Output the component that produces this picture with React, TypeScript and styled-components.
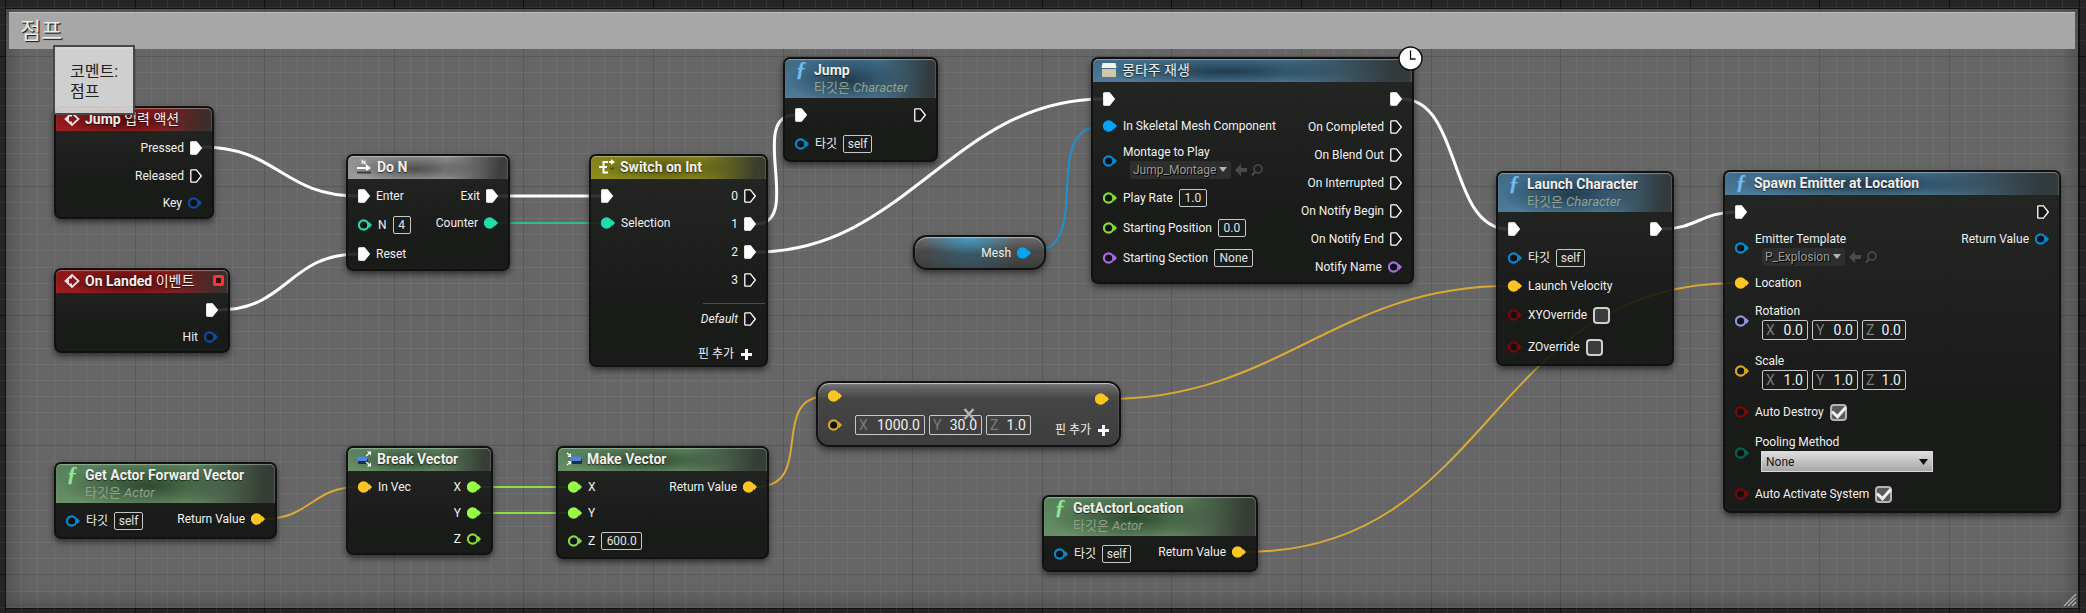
import React, { useId } from "react";
import styled, { createGlobalStyle, css } from "styled-components";

const GlobalStyle = createGlobalStyle`
  * { box-sizing: border-box; }
  body { margin: 0; background: #262626; }
  button, input, select { font: inherit; color: inherit; }
`;

const FONT = `Roboto, "Noto Sans CJK KR", sans-serif`;

/* ---------- canvas ---------- */

const Canvas = styled.main`
  position: relative;
  display: flex;
  min-height: 100vh;
  padding: 9px 8px 5px 6px;
  overflow: hidden;
  background: #252525;
  color: #f0f0f0;
  font: 12px/16px ${FONT};
`;

const CommentBox = styled.section`
  position: relative;
  flex: 1;
  display: flex;
  flex-direction: column;
  padding: 3px;
  background: rgba(255, 255, 255, 0.3);
  box-shadow: inset 0 0 24px 2px rgba(0, 0, 0, 0.32), 0 0 0 1px #111;
`;

const CommentTitle = styled.h1`
  margin: 0;
  height: 37px;
  padding: 0 11px;
  background: #a7a7a7;
  border-top: 1px solid #c0c0c0;
  color: #ececec;
  font: 400 23px/38px ${FONT};
  text-shadow: 1px 1px 1px #222, 1px 1px 0 #444;
`;

const Backdrop = styled.svg`
  position: absolute;
  inset: 0;
  width: 100%;
  height: 100%;
  pointer-events: none;
`;

const ResizeGrip = styled.svg`
  position: absolute;
  right: 9px;
  bottom: 6px;
`;

const GRID_STEPS = Array.from({ length: 40 }, (_, i) => i);

function Grid() {
  return (
    <Backdrop aria-hidden="true">
      <defs>
        <pattern id="grid" x="5" y="56" width="648" height="648" patternUnits="userSpaceOnUse">
          {GRID_STEPS.map((i) => {
            const at = Math.round(i * 16.2);
            const major = i % 8 === 0;
            const fill = major ? "#000" : "#fff";
            const opacity = major ? 0.55 : 0.06;
            return (
              <g key={i} fill={fill} fillOpacity={opacity}>
                <rect x={at} y="0" width="1" height="648" />
                <rect x="0" y={at} width="648" height="1" />
              </g>
            );
          })}
        </pattern>
      </defs>
      <rect width="100%" height="100%" fill="url(#grid)" />
    </Backdrop>
  );
}

/* ---------- wires ---------- */

type Wire = { from: [number, number]; to: [number, number]; bend: number; color?: string };

const WIRES: Wire[] = [
  { from: [202, 147], to: [358, 196], bend: 76 },
  { from: [218, 310], to: [358, 254], bend: 70 },
  { from: [498, 196], to: [601, 196], bend: 30 },
  { from: [756, 224], to: [795, 115], bend: 48 },
  { from: [756, 252], to: [1103, 99], bend: 150 },
  { from: [1402, 99], to: [1508, 229], bend: 60 },
  { from: [1662, 229], to: [1736, 212], bend: 34 },
  { from: [497, 223], to: [601, 223], bend: 30, color: "#35b893" },
  { from: [1031, 252], to: [1103, 126], bend: 66, color: "#1c93cf" },
  { from: [264, 519], to: [358, 487], bend: 46, color: "#d9ab35" },
  { from: [479, 487], to: [568, 487], bend: 30, color: "#8fdc48" },
  { from: [479, 513], to: [568, 513], bend: 30, color: "#8fdc48" },
  { from: [756, 487], to: [828, 396], bend: 62, color: "#d9ab35" },
  { from: [1107, 399], to: [1508, 286], bend: 172, color: "#d9ab35" },
  { from: [1245, 552], to: [1736, 283], bend: 249, color: "#d9ab35" },
];

function Wires() {
  return (
    <Backdrop aria-hidden="true" fill="none">
      {WIRES.map(({ from, to, bend, color }, i) => (
        <path
          key={i}
          d={`M${from[0]} ${from[1]}C${from[0] + bend} ${from[1]} ${to[0] - bend} ${to[1]} ${to[0]} ${to[1]}`}
          stroke={color ?? "#fff"}
          strokeWidth={color ? 2 : 3}
        />
      ))}
    </Backdrop>
  );
}

/* ---------- node shell ---------- */

type Tone = "red" | "gray" | "olive" | "blue" | "green";

const TONES: Record<Tone, { edge: string; mid: string; dark: string }> = {
  red: { edge: "#981d20", mid: "#8a1517", dark: "#4c0c0d" },
  gray: { edge: "#9a9a9a", mid: "#8e8e8e", dark: "#4e4e4e" },
  olive: { edge: "#8d8e1c", mid: "#80811a", dark: "#55560e" },
  blue: { edge: "#4d7b98", mid: "#3f6a86", dark: "#213c4e" },
  green: { edge: "#688f66", mid: "#56805a", dark: "#2f4a2f" },
};

const Node = styled.article<{ $x: number; $y: number; $w: number }>`
  position: absolute;
  left: ${(p) => p.$x}px;
  top: ${(p) => p.$y}px;
  width: ${(p) => p.$w}px;
  border: 2px solid #101110;
  border-radius: 7px;
  background: linear-gradient(rgba(27, 29, 27, 0.87), rgba(14, 16, 14, 0.87) 70%);
  box-shadow: 0 3px 6px rgba(0, 0, 0, 0.55);
`;

const Header = styled.header<{ $tone: Tone; $tall?: boolean }>`
  display: flex;
  gap: 5px;
  height: ${(p) => (p.$tall ? 39 : 23)}px;
  padding: 2px 8px 0;
  border-radius: 5px 5px 0 0;
  ${(p) => {
    const t = TONES[p.$tone];
    return css`
      background:
        linear-gradient(100deg, transparent 60%, rgba(46, 48, 46, 0.85) 94%),
        radial-gradient(ellipse 40% 60% at 42% 55%, ${t.dark}, transparent),
        linear-gradient(${t.mid}, ${t.edge});
    `;
  }}
  box-shadow: inset 0 1px 1px rgba(255, 255, 255, 0.35), inset -1px 0 1px rgba(255, 255, 255, 0.12);
`;

const HeaderIcon = styled.svg`
  flex: none;
  width: 16px;
  height: 16px;
  margin-top: 1px;
`;

const FunctionIcon = styled.span<{ $color: string }>`
  flex: none;
  width: 16px;
  color: ${(p) => p.$color};
  font: italic 700 22px/16px "Liberation Serif", serif;
  text-align: center;
`;

const Titles = styled.div`
  flex: 1;
  white-space: nowrap;
`;

const Title = styled.h2`
  margin: 0;
  color: #f2eeee;
  font: 700 14px/18px ${FONT};
  text-shadow: 0 1px 1px rgba(0, 0, 0, 0.6);
  white-space: nowrap;
`;

const Hangul = styled.span`
  font-weight: 400;
`;

const Subtitle = styled.p`
  margin: 0;
  color: #92a18a;
  font: 400 13px/17px ${FONT};
`;

const Body = styled.div`
  display: flex;
  justify-content: space-between;
  padding: 3px 10px 1px;
`;

const Column = styled.div<{ $end?: boolean }>`
  display: flex;
  flex-direction: column;
  align-items: ${(p) => (p.$end ? "flex-end" : "flex-start")};
  white-space: nowrap;
`;

const Row = styled.div<{ $h: number }>`
  display: flex;
  align-items: center;
  gap: 6px;
  height: ${(p) => p.$h}px;
`;

const Stack = styled.div`
  display: flex;
  flex-direction: column;
  gap: 1px;
`;

const Label = styled.label<{ $italic?: boolean }>`
  font-style: ${(p) => (p.$italic ? "italic" : "normal")};
`;

/* ---------- pins ---------- */

const PinSvg = styled.svg`
  flex: none;
  display: block;
`;

function Exec({ on }: { on?: boolean }) {
  return (
    <PinSvg width="12" height="14" viewBox="0 0 12 14" aria-hidden="true">
      <path
        d="M1.6 .8H6.4L11.3 7 6.4 13.2H1.6Q.8 13.2 .8 12.4V1.6Q.8 .8 1.6 .8Z"
        fill={on ? "#fff" : "#151515"}
        stroke="#fff"
        strokeWidth="1.3"
      />
    </PinSvg>
  );
}

function Pin({ color, on }: { color: string; on?: boolean }) {
  return (
    <PinSvg width="14" height="12" viewBox="0 0 14 12" aria-hidden="true">
      <circle cx="5.6" cy="6" r="4.7" fill={on ? color : "#101114"} stroke={color} strokeWidth="2.2" />
      <path d="M11 2.8L14 6 11 9.2Z" fill={color} />
    </PinSvg>
  );
}

const C = {
  struct: "#0f4ba3",
  int: "#1fdcab",
  object: "#0a8acb",
  objectOn: "#07a3f5",
  float: "#85d93c",
  floatOn: "#97fb45",
  name: "#a86bdc",
  vector: "#fdc521",
  vectorOff: "#d9a71f",
  bool: "#7c0608",
  rotator: "#8e95d8",
  enum: "#0b5f50",
};

/* ---------- form controls ---------- */

const ValueInput = styled.input<{ $w: number }>`
  width: ${(p) => p.$w}px;
  height: 18px;
  padding: 0;
  border: 1px solid #c8c8c8;
  border-radius: 2px;
  background: transparent;
  color: #e2e2e2;
  text-align: center;
  outline: none;
`;

const VectorRow = styled.div`
  display: flex;
  gap: 4px;
  padding-left: 7px;
`;

const AxisField = styled.label<{ $w: number }>`
  display: flex;
  align-items: center;
  width: ${(p) => p.$w}px;
  height: 20px;
  padding: 0 4px 0 3px;
  border: 1px solid #c8c8c8;
  border-radius: 2px;
  color: #7c7c7c;
  font-size: 14px;
`;

const AxisInput = styled.input`
  flex: 1;
  min-width: 0;
  padding: 0;
  border: 0;
  background: transparent;
  color: #f0f0f0;
  text-align: right;
  outline: none;
`;

const Check = styled.input.attrs({ type: "checkbox" })`
  appearance: none;
  width: 17px;
  height: 17px;
  margin: 0;
  border: 2px solid #cfcfcf;
  border-radius: 4px;
  background: #3b3b3b;
  display: grid;
  place-items: center;
  &:checked { background: #5a5a5a; border-color: #b4b4b4; }
  &:checked::before {
    content: "";
    width: 11px;
    height: 6px;
    border: solid #f0f0f0;
    border-width: 0 0 3px 3px;
    transform: translateY(-2px) rotate(-48deg);
  }
`;

const AssetRow = styled.div`
  display: flex;
  align-items: center;
  gap: 4px;
  padding-left: 7px;
`;

const AssetButton = styled.button`
  display: flex;
  align-items: center;
  gap: 3px;
  height: 18px;
  padding: 0 4px 0 3px;
  border: 0;
  border-radius: 3px;
  background: #2d2e2d;
  color: #9a9a9a;
  text-shadow: 1px 1px 0 #000;
`;

const IconButton = styled.button`
  display: flex;
  padding: 0;
  border: 0;
  background: none;
`;

const AddPinButton = styled.button`
  display: flex;
  align-items: center;
  gap: 7px;
  padding: 0;
  border: 0;
  background: none;
  color: #f0f0f0;
`;

const SelectWrap = styled.div`
  display: grid;
  align-items: center;
  width: 172px;
  margin-left: 6px;
  & > * { grid-area: 1 / 1; }
  & > svg { justify-self: end; margin-right: 5px; pointer-events: none; }
`;

const Select = styled.select`
  appearance: none;
  width: 100%;
  height: 21px;
  padding: 0 4px;
  border: 1px solid #d8d8d8;
  border-radius: 0;
  background: linear-gradient(#dedede, #a6a6a6);
  color: #161616;
`;

function ValuePin({ color, label, value, w }: { color: string; label: string; value: string; w: number }) {
  const id = useId();
  return (
    <Row $h={30}>
      <Pin color={color} />
      <Label htmlFor={id}>{label}</Label>
      <ValueInput id={id} $w={w} defaultValue={value} />
    </Row>
  );
}

function BoolPin({ label, checked }: { label: string; checked?: boolean }) {
  const id = useId();
  return (
    <Row $h={32}>
      <Pin color={C.bool} />
      <Label htmlFor={id}>{label}</Label>
      <Check id={id} defaultChecked={checked} />
    </Row>
  );
}

function VectorFields({ values, widths }: { values: string[]; widths: number[] }) {
  return (
    <VectorRow>
      {["X", "Y", "Z"].map((axis, i) => (
        <AxisField key={axis} $w={widths[i]}>
          {axis}
          <AxisInput defaultValue={values[i]} />
        </AxisField>
      ))}
    </VectorRow>
  );
}

function AssetPin({ label, asset }: { label: string; asset: string }) {
  return (
    <Row $h={44}>
      <Pin color={C.object} />
      <Stack>
        <span>{label}</span>
        <AssetRow>
          <AssetButton type="button">
            {asset}
            <svg width="8" height="5" aria-hidden="true"><path d="M0 0H8L4 5Z" fill="#b4b4b4" /></svg>
          </AssetButton>
          <IconButton type="button" aria-label="Use selected asset">
            <svg width="12" height="12"><path d="M0 6L6 0V4H12V8H6V12Z" fill="#4a4b4a" /></svg>
          </IconButton>
          <IconButton type="button" aria-label="Find asset">
            <svg width="12" height="12" fill="none" stroke="#4a4b4a">
              <circle cx="7" cy="5" r="4" strokeWidth="1.6" />
              <path d="M4 8L1 11.5" strokeWidth="2" />
            </svg>
          </IconButton>
        </AssetRow>
      </Stack>
    </Row>
  );
}

function OutPin({ label, color, on, h = 26 }: { label?: string; color: string; on?: boolean; h?: number }) {
  return (
    <Row $h={h}>
      {label && <span>{label}</span>}
      <Pin color={color} on={on} />
    </Row>
  );
}

function InPin({ label, color, on }: { label?: string; color: string; on?: boolean }) {
  return (
    <Row $h={26}>
      <Pin color={color} on={on} />
      {label && <span>{label}</span>}
    </Row>
  );
}

function ExecOut({ label, on, italic }: { label?: string; on?: boolean; italic?: boolean }) {
  return (
    <Row $h={28}>
      {label && <Label as="span" $italic={italic}>{label}</Label>}
      <Exec on={on} />
    </Row>
  );
}

function ExecIn({ label }: { label?: string }) {
  return (
    <Row $h={28}>
      <Exec on />
      {label && <span>{label}</span>}
    </Row>
  );
}

function AddPin() {
  return (
    <AddPinButton type="button">
      핀 추가
      <svg width="11" height="11" aria-hidden="true"><path d="M5.5 0V11M0 5.5H11" stroke="#fff" strokeWidth="3" /></svg>
    </AddPinButton>
  );
}

/* ---------- header icons ---------- */

const EventIcon = () => (
  <HeaderIcon viewBox="0 0 16 16">
    <path d="M8 2L14.5 8 8 14 1.5 8Z" fill="none" stroke="#f3dede" strokeWidth="1.8" />
    <path d="M8 2L1.5 8 8 14V10.5H5V5.5H8Z" fill="#f3dede" />
  </HeaderIcon>
);

const DoNIcon = () => (
  <HeaderIcon viewBox="0 0 16 16">
    <path d="M1 9H11" stroke="#fff" strokeWidth="2" />
    <path d="M10 5L15 9 10 12Z" fill="#fff" />
    <path d="M1 13.5H15" stroke="#3c3c3c" strokeWidth="2" />
    <path d="M6.2 5V1.5L9 5V1.5" fill="none" stroke="#fff" strokeWidth="1.1" />
  </HeaderIcon>
);

const SwitchIcon = () => (
  <HeaderIcon viewBox="0 0 16 16" fill="none" stroke="#fff" strokeWidth="2">
    <path d="M0 8H8M9 3H4.500V13.500H9M10 3H13" />
    <path d="M12 0L16 3 12 6Z" fill="#fff" stroke="none" />
    <path d="M11 9.500H15" stroke="#55560e" />
  </HeaderIcon>
);

const MontageIcon = () => (
  <HeaderIcon viewBox="0 0 16 16">
    <path d="M1.500 1H14.500L15.500 6H.5Z" fill="#f3f3ea" />
    <path d="M1 7H15V14Q15 15 14 15H2Q1 15 1 14Z" fill="#cfc7a6" />
  </HeaderIcon>
);

const BreakIcon = () => (
  <HeaderIcon viewBox="0 0 16 16">
    <rect x="2" y="8" width="10" height="5" rx="1" fill="#22303c" />
    <rect x="1" y="5.500" width="10" height="4.500" rx="1" fill="#4b86e8" />
    <path d="M10 5L13 2.500M10 11L13 13.500" stroke="#fff" strokeWidth="1.200" />
    <path d="M11 .5H15V4.500ZM11 15.500H15V11.500Z" fill="#fff" />
  </HeaderIcon>
);

const MakeIcon = () => (
  <HeaderIcon viewBox="0 0 16 16">
    <rect x="6" y="8" width="10" height="5" rx="1" fill="#22303c" />
    <rect x="5" y="5.500" width="10" height="4.500" rx="1" fill="#4b86e8" />
    <path d="M1 2L4 4.500M1 14L4 11.500" stroke="#fff" strokeWidth="1.200" />
    <path d="M5 2V6H1.500ZM5 14V10H1.500Z" fill="#fff" />
  </HeaderIcon>
);

/* ---------- special parts ---------- */

const Bubble = styled.aside`
  position: absolute;
  left: 53px;
  top: 45px;
  width: 82px;
  height: 70px;
  padding: 15px 15px 0;
  border: 2px solid rgba(48, 48, 48, 0.85);
  background: rgba(218, 218, 218, 0.9);
  color: #222;
  font: 400 16px/20px ${FONT};
  white-space: nowrap;
`;

const DelegatePin = styled.span`
  width: 11px;
  height: 11px;
  margin: 3px -4px 0 0;
  border: 3px solid #f03a36;
  border-radius: 2px;
  background: #3a0808;
`;

const Divider = styled.hr`
  width: 62px;
  margin: 9px -9px 1px 0;
  border: 0;
  border-top: 1px solid #4c4d4c;
`;

const AddPinRow = styled.div`
  display: flex;
  align-items: center;
  height: 20px;
  margin-top: 11px;
  padding-right: 4px;
`;

const LatentClock = styled.svg`
  position: absolute;
  top: -13px;
  right: -11px;
`;

const Pill = styled(Node)`
  display: flex;
  align-items: center;
  justify-content: flex-end;
  height: 35px;
  padding-right: 13px;
  border-radius: 14px;
  background:
    radial-gradient(ellipse 38% 50% at 42% 8%, rgba(60, 160, 205, 0.85), transparent),
    radial-gradient(ellipse 40% 60% at 42% 65%, rgba(50, 95, 110, 0.8), transparent),
    linear-gradient(#6c6c6c, #4a4a4a 45%, #3c3c3c);
  box-shadow: inset 0 1px 1px rgba(255, 255, 255, 0.5), 0 3px 6px rgba(0, 0, 0, 0.5);
`;

const Compact = styled(Node)`
  display: flex;
  justify-content: space-between;
  padding: 0 10px 0;
  border-radius: 13px;
  background: linear-gradient(rgba(116, 116, 116, 0.92), rgba(66, 66, 66, 0.92) 25%, rgba(58, 58, 58, 0.92));
  box-shadow: inset 0 1px 1px rgba(255, 255, 255, 0.6), 0 3px 6px rgba(0, 0, 0, 0.5);
`;

const Operator = styled.svg`
  position: absolute;
  left: 50%;
  top: 50%;
  transform: translate(-50%, -50%);
`;

function FunctionHeader({ tone, title, target }: { tone: "blue" | "green"; title: string; target?: string }) {
  return (
    <Header $tone={tone} $tall={Boolean(target)}>
      <FunctionIcon $color={tone === "blue" ? "#6ebcf0" : "#92e596"} aria-hidden="true">ƒ</FunctionIcon>
      <Titles>
        <Title>{title}</Title>
        {target && <Subtitle>타깃은 <i>{target}</i></Subtitle>}
      </Titles>
    </Header>
  );
}

function SelfPin() {
  return <ValuePin color={C.object} label="타깃" value="self" w={29} />;
}

function TriplePin({ label, color, value }: { label: string; color: string; value: string }) {
  return (
    <Row $h={50}>
      <Pin color={color} />
      <Stack>
        <span>{label}</span>
        <VectorFields values={[value, value, value]} widths={[46, 46, 44]} />
      </Stack>
    </Row>
  );
}

function PoolingPin() {
  const id = useId();
  return (
    <Row $h={50}>
      <Pin color={C.enum} />
      <Stack>
        <Label htmlFor={id}>Pooling Method</Label>
        <SelectWrap>
          <Select id={id} defaultValue="None">
            <option>None</option>
          </Select>
          <svg width="9" height="6" aria-hidden="true"><path d="M0 0H9L4.500 6Z" fill="#111" /></svg>
        </SelectWrap>
      </Stack>
    </Row>
  );
}

export default function App() {
  return (
    <>
      <GlobalStyle />
      <Canvas>
        <Grid />
        <CommentBox>
          <CommentTitle>점프</CommentTitle>
        </CommentBox>
        <Wires />

        <Node $x={54} $y={106} $w={160}>
          <Header $tone="red">
            <EventIcon />
            <Title>Jump <Hangul>입력 액션</Hangul></Title>
          </Header>
          <Body>
            <Column />
            <Column $end>
              <ExecOut label="Pressed" on />
              <ExecOut label="Released" />
              <OutPin label="Key" color={C.struct} />
            </Column>
          </Body>
        </Node>
        <Bubble>코멘트:<br />점프</Bubble>

        <Node $x={54} $y={268} $w={176}>
          <Header $tone="red">
            <EventIcon />
            <Titles><Title>On Landed <Hangul>이벤트</Hangul></Title></Titles>
            <DelegatePin />
          </Header>
          <Body>
            <Column />
            <Column $end>
              <ExecOut on />
              <OutPin label="Hit" color={C.struct} />
            </Column>
          </Body>
        </Node>

        <Node $x={346} $y={154} $w={164}>
          <Header $tone="gray">
            <DoNIcon />
            <Title>Do N</Title>
          </Header>
          <Body>
            <Column>
              <ExecIn label="Enter" />
              <ValuePin color={C.int} label="N" value="4" w={18} />
              <ExecIn label="Reset" />
            </Column>
            <Column $end>
              <ExecOut label="Exit" on />
              <OutPin label="Counter" color={C.int} on />
            </Column>
          </Body>
        </Node>

        <Node $x={589} $y={154} $w={179}>
          <Header $tone="olive">
            <SwitchIcon />
            <Title>Switch on Int</Title>
          </Header>
          <Body>
            <Column>
              <ExecIn />
              <InPin label="Selection" color={C.int} on />
            </Column>
            <Column $end>
              <ExecOut label="0" />
              <ExecOut label="1" on />
              <ExecOut label="2" on />
              <ExecOut label="3" />
              <Divider />
              <ExecOut label="Default" italic />
              <AddPinRow><AddPin /></AddPinRow>
            </Column>
          </Body>
        </Node>

        <Node $x={783} $y={57} $w={155}>
          <FunctionHeader tone="blue" title="Jump" target="Character" />
          <Body>
            <Column>
              <ExecIn />
              <SelfPin />
            </Column>
            <Column $end><ExecOut /></Column>
          </Body>
        </Node>

        <Pill $x={913} $y={235} $w={133}>
          <OutPin label="Mesh" color={C.objectOn} on />
        </Pill>

        <Node $x={1091} $y={57} $w={323}>
          <Header $tone="blue">
            <MontageIcon />
            <Title><Hangul>몽타주 재생</Hangul></Title>
          </Header>
          <Body>
            <Column>
              <ExecIn />
              <InPin label="In Skeletal Mesh Component" color={C.objectOn} on />
              <AssetPin label="Montage to Play" asset="Jump_Montage" />
              <ValuePin color={C.float} label="Play Rate" value="1.0" w={28} />
              <ValuePin color={C.float} label="Starting Position" value="0.0" w={28} />
              <ValuePin color={C.name} label="Starting Section" value="None" w={39} />
            </Column>
            <Column $end>
              <ExecOut on />
              <ExecOut label="On Completed" />
              <ExecOut label="On Blend Out" />
              <ExecOut label="On Interrupted" />
              <ExecOut label="On Notify Begin" />
              <ExecOut label="On Notify End" />
              <OutPin label="Notify Name" color={C.name} h={28} />
            </Column>
          </Body>
          <LatentClock width="25" height="25" aria-hidden="true">
            <circle cx="12.500" cy="12.500" r="11.500" fill="#fff" stroke="#111" strokeWidth="1.500" />
            <path d="M12.500 4.500V13H17.500" fill="none" stroke="#111" strokeWidth="1.300" />
          </LatentClock>
        </Node>

        <Node $x={1496} $y={171} $w={178}>
          <FunctionHeader tone="blue" title="Launch Character" target="Character" />
          <Body>
            <Column>
              <ExecIn />
              <SelfPin />
              <InPin label="Launch Velocity" color={C.vector} on />
              <BoolPin label="XYOverride" />
              <BoolPin label="ZOverride" />
            </Column>
            <Column $end><ExecOut on /></Column>
          </Body>
        </Node>

        <Node $x={1723} $y={170} $w={338}>
          <FunctionHeader tone="blue" title="Spawn Emitter at Location" />
          <Body>
            <Column>
              <ExecIn />
              <AssetPin label="Emitter Template" asset="P_Explosion" />
              <InPin label="Location" color={C.vector} on />
              <TriplePin label="Rotation" color={C.rotator} value="0.0" />
              <TriplePin label="Scale" color={C.vectorOff} value="1.0" />
              <BoolPin label="Auto Destroy" checked />
              <PoolingPin />
              <BoolPin label="Auto Activate System" checked />
            </Column>
            <Column $end>
              <ExecOut />
              <OutPin label="Return Value" color={C.object} />
            </Column>
          </Body>
        </Node>

        <Node $x={54} $y={462} $w={223}>
          <FunctionHeader tone="green" title="Get Actor Forward Vector" target="Actor" />
          <Body>
            <Column><SelfPin /></Column>
            <Column $end><OutPin label="Return Value" color={C.vector} on /></Column>
          </Body>
        </Node>

        <Node $x={346} $y={446} $w={147}>
          <Header $tone="green">
            <BreakIcon />
            <Title>Break Vector</Title>
          </Header>
          <Body>
            <Column><InPin label="In Vec" color={C.vector} on /></Column>
            <Column $end>
              <OutPin label="X" color={C.floatOn} on />
              <OutPin label="Y" color={C.floatOn} on />
              <OutPin label="Z" color={C.float} />
            </Column>
          </Body>
        </Node>

        <Node $x={556} $y={446} $w={213}>
          <Header $tone="green">
            <MakeIcon />
            <Title>Make Vector</Title>
          </Header>
          <Body>
            <Column>
              <InPin label="X" color={C.floatOn} on />
              <InPin label="Y" color={C.floatOn} on />
              <ValuePin color={C.float} label="Z" value="600.0" w={41} />
            </Column>
            <Column $end><OutPin label="Return Value" color={C.vector} on /></Column>
          </Body>
        </Node>

        <Compact $x={816} $y={381} $w={305}>
          <Column>
            <InPin color={C.vector} on />
            <Row $h={32}>
              <Pin color={C.vectorOff} />
              <VectorFields values={["1000.0", "30.0", "1.0"]} widths={[70, 53, 45]} />
            </Row>
          </Column>
          <Column $end>
            <OutPin color={C.vector} on h={32} />
            <Row $h={30}><AddPin /></Row>
          </Column>
          <Operator width="12" height="12" aria-hidden="true">
            <path d="M1.500 1L10.500 11M10.500 1L1.500 11" stroke="#b4b4b4" strokeWidth="2.600" />
          </Operator>
        </Compact>

        <Node $x={1042} $y={495} $w={216}>
          <FunctionHeader tone="green" title="GetActorLocation" target="Actor" />
          <Body>
            <Column><SelfPin /></Column>
            <Column $end><OutPin label="Return Value" color={C.vector} on /></Column>
          </Body>
        </Node>

        <ResizeGrip width="14" height="14" aria-hidden="true">
          <path d="M1 13L13 1M5 13L13 5M9 13L13 9" stroke="#b0b0b0" strokeWidth="1.200" />
        </ResizeGrip>
      </Canvas>
    </>
  );
}
